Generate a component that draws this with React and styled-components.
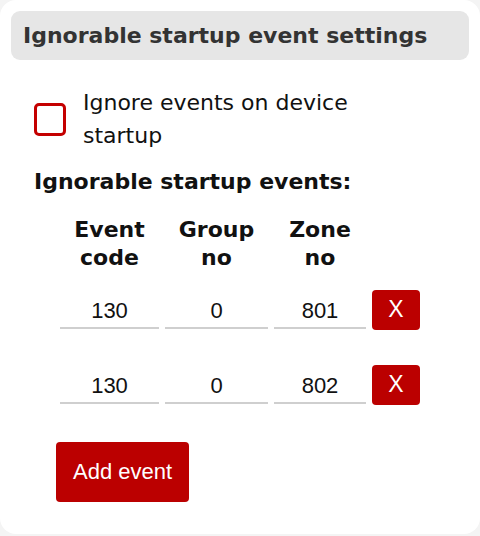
import React, { useState } from "react"
import styled, { createGlobalStyle } from "styled-components"

const GlobalStyle = createGlobalStyle`
  html, body {
    margin: 0;
    padding: 0;
    background: #f4f4f4;
  }
  body {
    font-family: "DejaVu Sans", Verdana, sans-serif;
  }
`

const Card = styled.div`
  background: #fff;
  border-radius: 16px;
  height: 534px;
  box-sizing: border-box;
  padding: 11px 11px 0;
`

const Header = styled.div`
  background: #e6e6e6;
  border-radius: 9px;
  height: 49px;
  padding: 0 12px;
  display: flex;
  align-items: center;
  font-size: 22px;
  font-weight: bold;
  color: #333;
`

const Body = styled.div`
  padding: 26px 23px 0;
`

const CheckRow = styled.label`
  display: flex;
  align-items: center;
  gap: 17px;
  width: 345px;
  font-size: 22px;
  line-height: 33px;
  color: #111;
`

const CheckBox = styled.span`
  flex: none;
  width: 26px;
  height: 27px;
  border: 3px solid #c40000;
  background: ${(p) => (p.checked ? "#bb0000" : "#fff")};
  border-radius: 5px;
`

const SubTitle = styled.div`
  margin-top: 17px;
  font-size: 22px;
  font-weight: bold;
  color: #111;
`

const EventTable = styled.table`
  margin: 22px 0 0 23px;
  border-collapse: collapse;
`

const HeadCell = styled.th`
  font-size: 22px;
  line-height: 28px;
  font-weight: bold;
  text-align: center;
  color: #111;
  padding: 0 3px;
  width: ${(p) => p.w}px;
`

const Cell = styled.td`
  padding: 0 3px;
  height: 75px;
  vertical-align: middle;
`

const NumInput = styled.input`
  width: 100%;
  box-sizing: border-box;
  border: none;
  border-bottom: 2px solid #cfcfcf;
  outline: none;
  background: transparent;
  font-family: "Liberation Sans", Arial, sans-serif;
  font-size: 22px;
  text-align: center;
  color: #111;
  padding: 1px 0 3px;
  margin-top: 6px;
`

const RedButton = styled.button`
  background: #bb0000;
  color: #fff;
  border: none;
  border-radius: 4px;
  font-family: "Liberation Sans", Arial, sans-serif;
  font-size: ${(p) => (p.big ? 22 : 23)}px;
  padding: ${(p) => (p.big ? "0 17px" : "0")};
  width: ${(p) => (p.big ? "auto" : "48px")};
  height: ${(p) => (p.big ? "60px" : "40px")};
  cursor: pointer;
`

const AddButton = styled(RedButton)`
  margin: 20px 0 0 22px;
`

export default function App() {
  const [ignore, setIgnore] = useState(false)
  const [events, setEvents] = useState([
    { code: "130", group: "0", zone: "801" },
    { code: "130", group: "0", zone: "802" },
  ])

  const update = (i, key, value) => {
    setEvents(events.map((ev, idx) => (idx === i ? { ...ev, [key]: value } : ev)))
  }

  return (
    <>
      <GlobalStyle />
      <Card>
        <Header>Ignorable startup event settings</Header>
        <Body>
          <CheckRow onClick={() => setIgnore(!ignore)}>
            <CheckBox checked={ignore} />
            <span>Ignore events on device startup</span>
          </CheckRow>
          <SubTitle>Ignorable startup events:</SubTitle>
          <EventTable>
            <thead>
              <tr>
                <HeadCell w={99}>Event<br />code</HeadCell>
                <HeadCell w={103}>Group<br />no</HeadCell>
                <HeadCell w={92}>Zone<br />no</HeadCell>
                <HeadCell w={48}></HeadCell>
              </tr>
            </thead>
            <tbody>
              {events.map((ev, i) => (
                <tr key={i}>
                  <Cell><NumInput value={ev.code} onChange={(e) => update(i, "code", e.target.value)} /></Cell>
                  <Cell><NumInput value={ev.group} onChange={(e) => update(i, "group", e.target.value)} /></Cell>
                  <Cell><NumInput value={ev.zone} onChange={(e) => update(i, "zone", e.target.value)} /></Cell>
                  <Cell>
                    <RedButton onClick={() => setEvents(events.filter((_, idx) => idx !== i))}>X</RedButton>
                  </Cell>
                </tr>
              ))}
            </tbody>
          </EventTable>
          <AddButton big onClick={() => setEvents([...events, { code: "", group: "", zone: "" }])}>
            Add event
          </AddButton>
        </Body>
      </Card>
    </>
  )
}
